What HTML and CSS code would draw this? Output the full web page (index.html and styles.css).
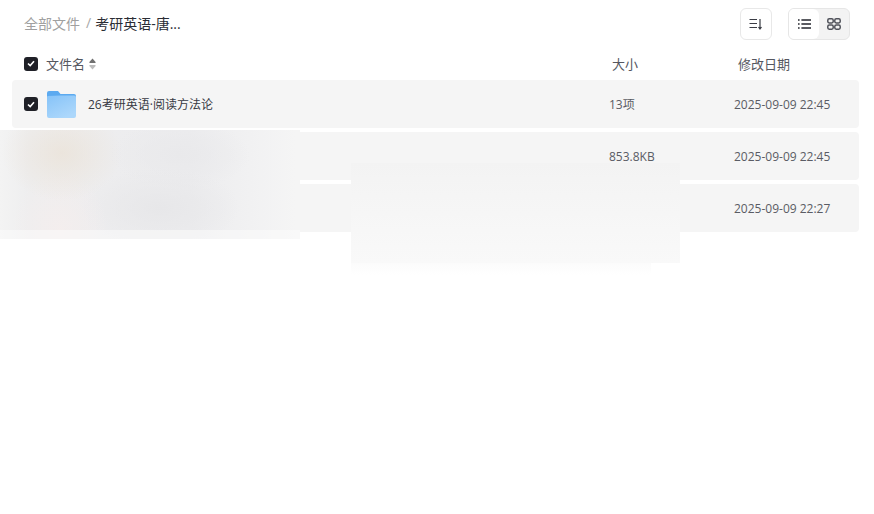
FILE: index.html
```html
<!DOCTYPE html>
<html>
<head>
    <meta charset="UTF-8">
    <title>全部文件</title>
    <link rel="stylesheet" href="styles.css">
</head>
<body>
    <div class="file-page">
        <div class="toolbar">
            <div class="crumbs">
                <span class="crumb-root">全部文件</span>
                <span class="crumb-sep">/</span>
                <span class="crumb-current">考研英语-唐...</span>
            </div>
            <div class="tools">
                <button class="tool-btn">
                    <svg width="14" height="12" viewBox="0 0 14 12">
                        <path d="M0.5 1.5H8M0.5 5.5H8M0.5 9.5H8" stroke="#3a3c44" stroke-width="1.2" fill="none"/>
                        <path d="M11 1V10.5M9.5 9L11 11L12.5 9" stroke="#3a3c44" stroke-width="1.2" fill="none"/>
                    </svg>
                </button>
                <div class="view-switch">
                    <span class="view-opt active">
                        <svg width="13" height="10" viewBox="0 0 13 10">
                            <path d="M0 1H1.6M0 5H1.6M0 9H1.6M3.4 1H13M3.4 5H13M3.4 9H13" stroke="#24262e" stroke-width="1.3" fill="none"/>
                        </svg>
                    </span>
                    <span class="view-opt">
                        <svg width="14" height="12" viewBox="0 0 14 12">
                            <rect x="0.8" y="0.8" width="5.4" height="4.2" rx="1.4" stroke="#50525a" stroke-width="1.5" fill="none"/>
                            <rect x="7.8" y="0.8" width="5.4" height="4.2" rx="1.4" stroke="#50525a" stroke-width="1.5" fill="none"/>
                            <rect x="0.8" y="7" width="5.4" height="4.2" rx="1.4" stroke="#50525a" stroke-width="1.5" fill="none"/>
                            <rect x="7.8" y="7" width="5.4" height="4.2" rx="1.4" stroke="#50525a" stroke-width="1.5" fill="none"/>
                        </svg>
                    </span>
                </div>
            </div>
        </div>

        <div class="list-head">
            <span class="check">
                <svg width="8" height="7" viewBox="0 0 8 7"><path d="M1 3.5L3.2 5.6L7 1.2" stroke="#fff" stroke-width="1.6" fill="none"/></svg>
            </span>
            <span class="head-name">文件名</span>
            <svg class="sort-icon" width="7" height="12" viewBox="0 0 7 12">
                <path d="M3.5 0.5L6.6 4Q7 5 6 5H1Q0 5 0.4 4Z" fill="#707070"/>
                <path d="M3.5 11.5L0.4 8Q0 7 1 7H6Q7 7 6.6 8Z" fill="#bcbcbc"/>
            </svg>
            <span class="head-size">大小</span>
            <span class="head-date">修改日期</span>
        </div>

        <div class="file-list">
            <div class="file-row">
                <span class="check">
                    <svg width="8" height="7" viewBox="0 0 8 7"><path d="M1 3.5L3.2 5.6L7 1.2" stroke="#fff" stroke-width="1.6" fill="none"/></svg>
                </span>
                <svg class="folder" width="29" height="27" viewBox="0 0 29 27">
                    <defs>
                        <linearGradient id="folder-front" x1="0" y1="0" x2="0.6" y2="1">
                            <stop offset="0" stop-color="#86c3f8"/>
                            <stop offset="1" stop-color="#acd7fb"/>
                        </linearGradient>
                    </defs>
                    <path d="M0 2Q0 0 2 0H11L13.5 3H27Q29 3 29 5V12H0Z" fill="#5caaf0"/>
                    <path d="M0 6Q0 5 1 5L13.5 4.5H27Q29 4.5 29 6V25Q29 27 27 27H2Q0 27 0 25Z" fill="url(#folder-front)"/>
                </svg>
                <span class="file-name">26考研英语·阅读方法论</span>
                <span class="file-size">13项</span>
                <span class="file-date">2025-09-09 22:45</span>
            </div>
            <div class="file-row">
                <span class="file-size">853.8KB</span>
                <span class="file-date">2025-09-09 22:45</span>
            </div>
            <div class="file-row">
                <span class="file-date">2025-09-09 22:27</span>
            </div>
        </div>

        <div class="blur-patch patch-left"></div>
        <div class="blur-patch patch-mid"></div>
    </div>
</body>
</html>
```

FILE: styles.css
```css
* {
    margin: 0;
    padding: 0;
    box-sizing: border-box;
}

body {
    font-family: "Open Sans", "Noto Sans CJK SC", sans-serif;
    background-color: #fff;
    color: #3a3c44;
    font-size: 12px;
    overflow: hidden;
}

.file-page {
    position: relative;
    height: 514px;
    padding: 8px 15px 0 12px;
}

.toolbar {
    display: flex;
    justify-content: space-between;
    align-items: center;
    height: 32px;
    padding-left: 12px;
}

.crumbs {
    display: flex;
    align-items: center;
    padding-bottom: 3px;
    font-size: 14px;
}

.crumb-root {
    color: #a0a0a0;
}

.crumb-sep {
    color: #a8a8a8;
    margin: 0 4px 0 6px;
}

.crumb-current {
    color: #2a2c34;
}

.tools {
    display: flex;
    gap: 16px;
    padding-right: 9px;
}

.tool-btn {
    display: flex;
    align-items: center;
    justify-content: center;
    width: 32px;
    height: 32px;
    background-color: #fff;
    border: 1px solid #e8e8e8;
    border-radius: 6px;
}

.view-switch {
    display: flex;
    width: 62px;
    height: 32px;
    background-color: #f3f3f3;
    border: 1px solid #e6e6e6;
    border-radius: 6px;
    overflow: hidden;
}

.view-opt {
    display: flex;
    align-items: center;
    justify-content: center;
    width: 30px;
}

.view-opt.active {
    background-color: #fff;
    border-radius: 0 6px 6px 0;
}

.check {
    display: flex;
    align-items: center;
    justify-content: center;
    flex-shrink: 0;
    width: 14px;
    height: 14px;
    background-color: #1f2027;
    border-radius: 3px;
}

.list-head {
    display: flex;
    align-items: center;
    height: 40px;
    padding: 7px 0 0 12px;
    font-size: 13px;
    color: #55575f;
}

.head-name {
    margin-left: 8px;
    padding-bottom: 1px;
}

.sort-icon {
    margin-left: 4px;
}

.head-size {
    position: absolute;
    left: 612px;
}

.head-date {
    position: absolute;
    left: 738px;
}

.file-list {
    display: flex;
    flex-direction: column;
    gap: 4px;
}

.file-row {
    position: relative;
    display: flex;
    align-items: center;
    height: 48px;
    padding-left: 12px;
    background-color: #f5f5f5;
    border-radius: 4px;
}

.folder {
    margin-left: 9px;
    margin-top: 1px;
}

.file-name {
    margin-left: 12px;
    color: #373943;
}

.file-size {
    position: absolute;
    left: 597px;
    color: #5a5c64;
}

.file-date {
    position: absolute;
    left: 722px;
    color: #5a5c64;
}

/* redacted areas over the list */
.blur-patch {
    position: absolute;
}

.patch-left {
    left: 0;
    top: 130px;
    width: 300px;
    height: 109px;
    background:
        radial-gradient(ellipse 60px 48px at 62px 23px, rgba(234, 225, 213, 0.7), transparent),
        radial-gradient(ellipse 48px 60px at 60px 100px, rgba(245, 238, 237, 0.8), transparent),
        radial-gradient(ellipse 80px 40px at 160px 78px, #e7e7e9, transparent),
        radial-gradient(ellipse 70px 35px at 180px 25px, #e9e9eb, transparent),
        linear-gradient(to right, #f3f3f3 0, #eeeeef 28px, #ececee 190px, #f1f1f2 250px, #f5f5f5 295px);
}

.patch-left::after {
    content: "";
    position: absolute;
    left: 0;
    right: 0;
    bottom: 0;
    height: 9px;
    background-color: rgba(252, 252, 252, 0.55);
}

.patch-mid {
    left: 351px;
    top: 163px;
    width: 329px;
    height: 100px;
    background: linear-gradient(to bottom, #f3f3f3 0, #f6f6f6 50%, #f9f9f9 100%);
}

.patch-mid::after {
    content: "";
    position: absolute;
    left: 0;
    top: 100%;
    width: 300px;
    height: 12px;
    background: linear-gradient(to bottom, #fbfbfb, #fff);
}
```
